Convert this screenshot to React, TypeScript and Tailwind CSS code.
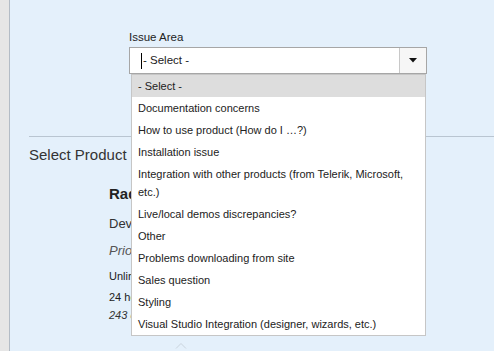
import React from "react";

const options = [
  "- Select -",
  "Documentation concerns",
  "How to use product (How do I …?)",
  "Installation issue",
  "Integration with other products (from Telerik, Microsoft, etc.)",
  "Live/local demos discrepancies?",
  "Other",
  "Problems downloading from site",
  "Sales question",
  "Styling",
  "Visual Studio Integration (designer, wizards, etc.)",
];

const App = () => {
  return (
    <div className="flex h-[351px] w-[494px] overflow-hidden bg-[#e4f0fb] font-['Liberation_Sans',Arial,sans-serif] text-[#333]">
      <div className="w-[10px] shrink-0 border-r border-[#b3bcc6] bg-[#e6e6e6]" />
      <div className="flex-1">
        <div className="pl-[119px] pt-[30px]">
          <div className="text-[11.5px] leading-[14px] text-[#222]">Issue Area</div>
          <div className="relative mt-[3px] w-[298px]">
            <div className="flex h-[27px] border border-[#a6a6a6] bg-white">
              <div className="flex flex-1 items-center pl-[11px] text-[11.5px] text-[#222]">
                <span className="mr-[1px] h-[16px] w-[1px] bg-black" />
                - Select -
              </div>
              <div className="flex w-[27px] items-center justify-center border-l border-[#c8c8c8] bg-[#f6f6f6]">
                <svg width="8" height="5" viewBox="0 0 8 5">
                  <path d="M0 0h8L4 4.5z" fill="#111" />
                </svg>
              </div>
            </div>
            <div className="absolute left-[2px] top-full z-10 w-[295px] border border-[#c6c6c6] bg-white text-[11px] leading-[18px] text-[#222]">
              {options.map((o, i) => (
                <div key={o} className={`pl-[6px] pr-[16px] py-[2px] ${i === 0 ? "bg-[#dddddd]" : ""}`}>
                  {o}
                </div>
              ))}
            </div>
          </div>
        </div>

        <div className="ml-[19px] mt-[62px] border-t border-[#b9c5d1]" />

        <div className="ml-[19px] mt-[9px] text-[15px] leading-[18px] text-[#333]">
          Select Product and License
        </div>

        <div className="ml-[99px]">
          <div className="mt-[21px] text-[15px] font-bold leading-[18px] text-[#222]">
            RadControls for ASP.NET AJAX
          </div>
          <div className="mt-[13px] text-[13px] leading-[16px] text-[#333]">Developer License</div>
          <div className="mt-[11px] text-[13px] italic leading-[16px] text-[#555]">Priority Support</div>
          <div className="mt-[11px] text-[11px] leading-[13px] text-[#222]">Unlimited support tickets</div>
          <div className="mt-[8px] text-[11px] leading-[13px] text-[#222]">24 hour response time</div>
          <div className="mt-[5px] text-[11px] italic leading-[13px] text-[#333]">243 days remaining</div>
          <div className="ml-[66px] mt-[20px]">
            <svg width="12" height="7" viewBox="0 0 12 7">
              <path d="M1 6.5L6 1.5l5 5" fill="none" stroke="#c9d3dc" strokeWidth="1" />
            </svg>
          </div>
        </div>
      </div>
    </div>
  );
};

export default App;
